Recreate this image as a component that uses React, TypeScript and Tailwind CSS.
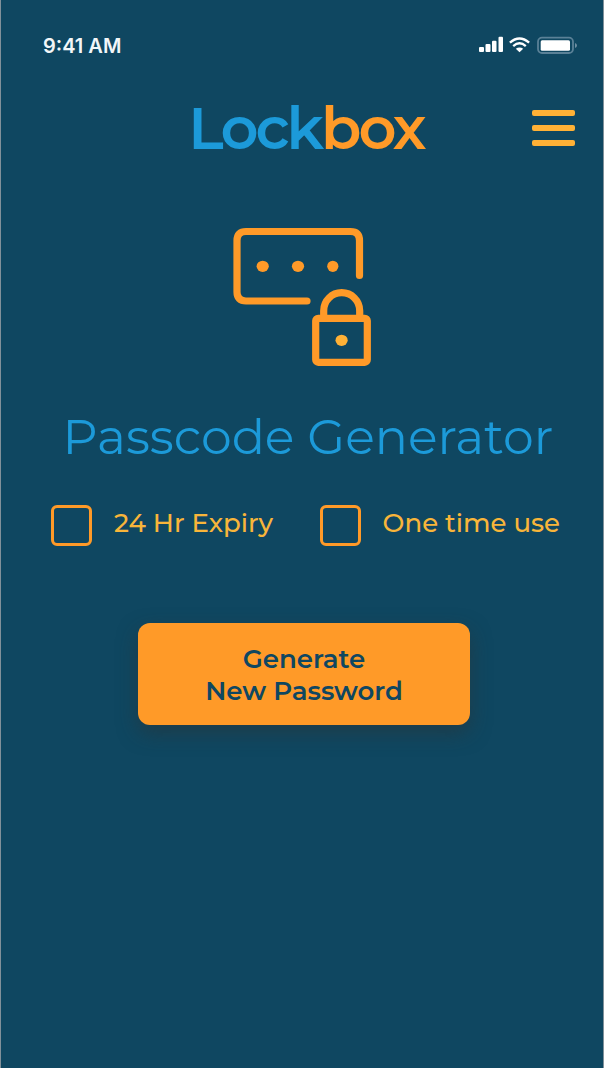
import { useState } from "react";

function StatusBar() {
  return (
    <div className="flex h-7 items-center justify-between pr-[25px] pl-[42px] text-[#f2f6f8]">
      <span className="font-['Inter',sans-serif] text-xl font-semibold">9:41 AM</span>
      <svg width="100" height="20" viewBox="0 0 100 20" aria-hidden="true">
        <g fill="#fff">
          <rect x="1" y="11" width="5" height="5" rx="1" />
          <rect x="7.5" y="8" width="5" height="8" rx="1" />
          <rect x="14" y="4.8" width="4.5" height="11.2" rx="1" />
          <rect x="20.5" y="0.7" width="4.5" height="15.3" rx="1" />
          <path d="M41.5 16.2 L37.8 12.8 Q41.5 10 45.2 12.8 Z" />
        </g>
        <g fill="none" stroke="#fff" strokeWidth="2.4">
          <path d="M31.9 6.6 Q41.5 -1.7 51.1 6.6" />
          <path d="M35.2 10.1 Q41.5 4.6 47.8 10.1" />
        </g>
        <rect x="60" y="1.7" width="35" height="15.3" rx="4" fill="none" stroke="#5a8197" strokeWidth="1.8" />
        <rect x="62.7" y="4.2" width="29.3" height="10.6" rx="1.5" fill="#fff" />
        <path d="M97 7 Q99 7.8 99 9.5 Q99 11.2 97 12 Z" fill="#6d8ea1" />
      </svg>
    </div>
  );
}

function PasscodeIcon() {
  return (
    <svg width="144" height="144" viewBox="0 0 144 144" className="mx-auto" aria-hidden="true">
      <g fill="none" stroke="#ff9a28" strokeWidth="7.2" strokeLinecap="round" strokeLinejoin="round">
        <path d="M77 76 H16 Q7 76 7 67 V15.5 Q7 6.5 16 6.5 H120.5 Q129.5 6.5 129.5 15.5 V50.5" />
        <rect x="85.7" y="93.3" width="51.6" height="44" rx="2.5" />
        <path d="M93.7 92 V85.7 A18 18 0 0 1 129.7 85.7 V92" />
      </g>
      <g fill="#ff9a28">
        <ellipse cx="32.7" cy="41.3" rx="6.1" ry="5.6" />
        <ellipse cx="68" cy="41.3" rx="6.1" ry="5.6" />
        <ellipse cx="102.8" cy="41.3" rx="5.6" ry="5.6" />
      </g>
      <ellipse cx="111.6" cy="115.3" rx="6.1" ry="5.6" fill="#ffb136" />
    </svg>
  );
}

function Option({ label }: { label: string }) {
  const [checked, setChecked] = useState(false);
  return (
    <label className="flex items-start gap-[22px] text-[26px] leading-9 font-medium text-[#f8b53a]">
      <input
        type="checkbox"
        checked={checked}
        onChange={(e) => setChecked(e.target.checked)}
        className="size-[41px] shrink-0 appearance-none rounded-md border-3 border-[#ff9a28] checked:bg-[#ff9a28]"
      />
      <span className="whitespace-nowrap">{label}</span>
    </label>
  );
}

export default function App() {
  return (
    <div className="min-h-screen border-x border-[#81919a] bg-[#0f4761] pt-8 font-['Montserrat','Inter',sans-serif]">
      <StatusBar />
      <header className="mt-9 grid grid-cols-[1fr_auto_1fr] items-center pr-7 pl-9">
        <h1 className="col-start-2 text-[59px] leading-16 font-semibold tracking-tighter text-[#1c9ad9]">
          Lock<span className="text-[#ff9a28]">box</span>
        </h1>
        <button type="button" aria-label="Menu" className="flex flex-col gap-[9px] justify-self-end">
          <span className="h-1.5 w-[43px] rounded-xs bg-[#ffb136]" />
          <span className="h-1.5 w-[43px] rounded-xs bg-[#ffb136]" />
          <span className="h-1.5 w-[43px] rounded-xs bg-[#ffb136]" />
        </button>
      </header>
      <main className="mt-[65px] flex flex-col items-center">
        <PasscodeIcon />
        <h2 className="mt-10 pl-3 text-center text-[49px] leading-14 font-normal text-[#1c9ad9]">Passcode Generator</h2>
        <div className="mt-10 flex w-full justify-between pr-[43px] pl-[50px]">
          <Option label="24 Hr Expiry" />
          <Option label="One time use" />
        </div>
        <div className="mt-[77px] flex w-full justify-center pl-1">
          <button
            type="button"
            className="w-[332px] rounded-xl bg-[#ff9a28] pt-5 pb-[18px] text-[26px] leading-8 font-semibold text-[#0f4761] shadow-[0_8px_20px_rgba(45,50,50,0.5)]"
          >
            Generate
            <br />
            New Password
          </button>
        </div>
      </main>
    </div>
  );
}
